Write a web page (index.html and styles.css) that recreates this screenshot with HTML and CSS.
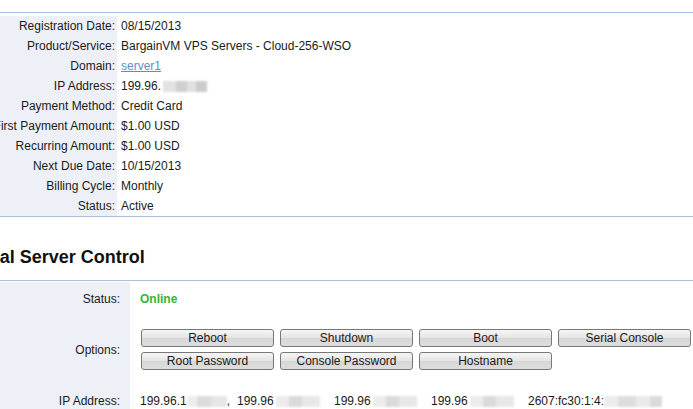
FILE: index.html
```html
<!DOCTYPE html>
<html>
<head>
<meta charset="utf-8">
<link rel="stylesheet" href="styles.css">
</head>
<body>
<div class="details">
  <div class="row"><div class="lbl">Registration Date:</div><div class="val">08/15/2013</div></div>
  <div class="row"><div class="lbl">Product/Service:</div><div class="val">BargainVM VPS Servers - Cloud-256-WSO</div></div>
  <div class="row"><div class="lbl">Domain:</div><div class="val"><a class="link" href="#">server1</a></div></div>
  <div class="row"><div class="lbl">IP Address:</div><div class="val">199.96.<span class="blur b1"></span></div></div>
  <div class="row"><div class="lbl">Payment Method:</div><div class="val">Credit Card</div></div>
  <div class="row"><div class="lbl">First Payment Amount:</div><div class="val">$1.00 USD</div></div>
  <div class="row"><div class="lbl">Recurring Amount:</div><div class="val">$1.00 USD</div></div>
  <div class="row"><div class="lbl">Next Due Date:</div><div class="val">10/15/2013</div></div>
  <div class="row"><div class="lbl">Billing Cycle:</div><div class="val">Monthly</div></div>
  <div class="row"><div class="lbl">Status:</div><div class="val">Active</div></div>
</div>

<h2 class="heading"><span class="cut">Virtual Server Control</span></h2>

<div class="control">
  <div class="crow status-row"><div class="clbl">Status:</div><div class="cval"><span class="online">Online</span></div></div>
  <div class="crow"><div class="clbl">Options:</div>
    <div class="cval buttons">
      <button class="btn">Reboot</button>
      <button class="btn">Shutdown</button>
      <button class="btn">Boot</button>
      <button class="btn">Serial Console</button>
      <button class="btn">Root Password</button>
      <button class="btn">Console Password</button>
      <button class="btn">Hostname</button>
    </div>
  </div>
  <div class="crow ip-row"><div class="clbl">IP Address:</div>
    <div class="cval ips">
      <span class="ip">199.96.1<span class="blur b2"></span>,</span>
      <span class="ip">199.96<span class="blur b3"></span></span>
      <span class="ip">199.96<span class="blur b3"></span></span>
      <span class="ip">199.96<span class="blur b3"></span></span>
      <span class="ip">2607:fc30:1:4:<span class="blur b4"></span></span>
    </div>
  </div>
</div>
</body>
</html>
```
FILE: styles.css
```css
html, body {
  margin: 0;
  padding: 0;
  background: #fff;
}
body {
  font-family: "Liberation Sans", Arial, sans-serif;
  font-size: 12px;
  color: #1a1a1a;
  width: 693px;
  height: 409px;
  overflow: hidden;
}
.details {
  margin-top: 12px;
  border-top: 1px solid #a9c1da;
  border-bottom: 1px solid #a9c1da;
  padding: 3px 0 2px;
  display: flex;
  flex-direction: column;
  gap: 2px;
}
.row {
  display: grid;
  grid-template-columns: 117px 1fr;
  height: 18px;
  line-height: 20px;
}
.lbl {
  background: #edf1f7;
  display: flex;
  justify-content: flex-end;
  white-space: nowrap;
  padding-right: 2px;
}
.val {
  padding-left: 4px;
  white-space: nowrap;
}
.link {
  color: #5e8fc6;
  text-decoration: underline;
}
.blur {
  display: inline-block;
  vertical-align: middle;
  height: 11px;
  filter: blur(1px);
}
.b1 {
  width: 44px;
  margin-left: 2px;
  background: linear-gradient(90deg, #e2e2e2 0 30%, #cfcfcf 30% 55%, #e0e0e0 55% 75%, #cbcbcb 75% 100%);
}
.b2 {
  width: 40px;
  background: linear-gradient(90deg, #eeeeee 0 25%, #dcdcdc 25% 60%, #e6e6e6 60% 100%);
}
.b3 {
  width: 44px;
  margin-left: 2px;
  background: linear-gradient(90deg, #ececec 0 30%, #dadada 30% 60%, #e8e8e8 60% 100%);
}
.b4 {
  width: 58px;
  background: linear-gradient(90deg, #ececec 0 25%, #dddddd 25% 55%, #eaeaea 55% 80%, #dadada 80% 100%);
}
.heading {
  margin: 29px 0 12px;
  height: 22px;
  line-height: 22px;
  font-size: 18px;
  font-weight: bold;
  color: #111;
  white-space: nowrap;
  overflow: hidden;
}
.cut {
  display: inline-block;
  margin-left: -41px;
}
.control {
  border-top: 1px solid #a9c1da;
  padding-top: 1px;
}
.crow {
  display: grid;
  grid-template-columns: 130px 1fr;
}
.clbl {
  background: #edf1f7;
  display: flex;
  align-items: center;
  justify-content: flex-end;
  padding-right: 10px;
}
.cval {
  display: flex;
  align-items: center;
  padding-left: 10px;
}
.status-row {
  height: 34px;
}
.online {
  color: #34b634;
  font-weight: bold;
}
.buttons {
  display: grid;
  grid-template-columns: repeat(4, 133px);
  column-gap: 6px;
  row-gap: 5px;
  padding: 13px 0 14px 11px;
  align-content: center;
}
.btn {
  height: 18px;
  margin: 0;
  padding: 0;
  font-family: "Liberation Sans", Arial, sans-serif;
  font-size: 12px;
  color: #1a1a1a;
  border: 1px solid #777;
  border-radius: 3px;
  background: linear-gradient(#f6f6f6, #e4e4e4 50%, #d6d6d6 51%, #dedede);
  line-height: 16px;
}
.ip-row {
  height: 34px;
}
.ips {
  white-space: nowrap;
}
.ip {
  display: inline-block;
  width: 97px;
}
```
